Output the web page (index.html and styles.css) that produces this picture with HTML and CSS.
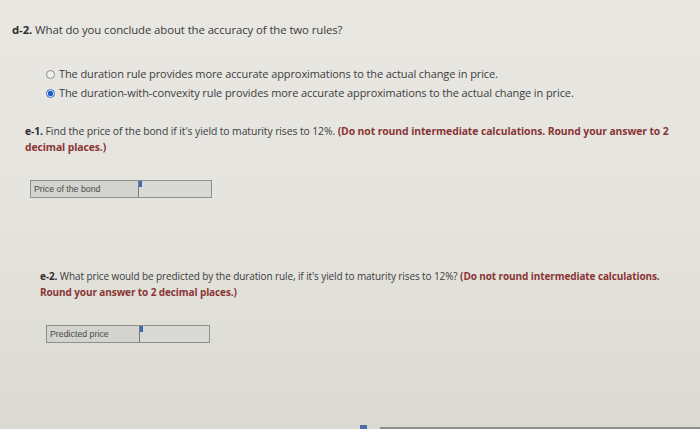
FILE: index.html
```html
<!DOCTYPE html>
<html lang="en">
<head>
<meta charset="utf-8">
<title>Bond question</title>
<link rel="stylesheet" href="styles.css">
</head>
<body>
<main class="page">
  <p class="q-d2"><b>d-2.</b> What do you conclude about the accuracy of the two rules?</p>

  <ul class="options">
    <li class="option"><span class="radio"></span>The duration rule provides more accurate approximations to the actual change in price.</li>
    <li class="option"><span class="radio checked"></span>The duration-with-convexity rule provides more accurate approximations to the actual change in price.</li>
  </ul>

  <section class="part part-e1">
    <p class="prompt"><b>e-1.</b> Find the price of the bond if it's yield to maturity rises to 12%. <strong class="note">(Do not round intermediate calculations. Round your answer to 2 decimal places.)</strong></p>
    <div class="answer answer-e1">
      <span class="label">Price of the bond</span>
      <span class="field"><span class="flag"></span></span>
    </div>
  </section>

  <section class="part part-e2">
    <p class="prompt"><b>e-2.</b> What price would be predicted by the duration rule, if it's yield to maturity rises to 12%? <strong class="note">(Do not round intermediate calculations. Round your answer to 2 decimal places.)</strong></p>
    <div class="answer answer-e2">
      <span class="label">Predicted price</span>
      <span class="field"><span class="flag"></span></span>
    </div>
  </section>

  <div class="bottom-edge"><span class="icon-bit"></span></div>
</main>
</body>
</html>
```

FILE: styles.css
```css
* { box-sizing: border-box; }
html, body { margin: 0; padding: 0; }
body {
  width: 700px;
  height: 429px;
  overflow: hidden;
  font-family: "Open Sans", "Liberation Sans", sans-serif;
  color: #3b3b3b;
  background: linear-gradient(180deg, #e8e7e2 0%, #e5e4de 45%, #dbdad2 100%);
}
.page {
  display: flex;
  flex-direction: column;
  height: 429px;
}
p { margin: 0; }
b { font-weight: 700; color: #2e2e2e; }

.q-d2 {
  margin: 22px 0 0 12px;
  font-size: 11.4px;
  line-height: 16px;
  letter-spacing: -0.1px;
}

.options {
  list-style: none;
  margin: 28px 0 0 46px;
  padding: 0;
  display: flex;
  flex-direction: column;
  gap: 3px;
}
.option {
  display: flex;
  align-items: center;
  gap: 4px;
  font-size: 11px;
  line-height: 16px;
  letter-spacing: -0.1px;
  color: #3d3d3d;
}
.radio {
  width: 9px;
  height: 9px;
  border-radius: 50%;
  border: 1px solid #8a8a8a;
  background: #eeeeea;
  flex: none;
}
.radio.checked {
  border-color: #3a6fc0;
  background: radial-gradient(circle, #1f5fc4 0 2.6px, #e8eef8 3px);
}

.part { display: flex; flex-direction: column; }
.prompt {
  font-size: 10.4px;
  line-height: 15.5px;
  letter-spacing: -0.1px;
  color: #3d3d3d;
}
.note { color: #8a3535; font-weight: 700; }

.part-e1 { margin: 23px 0 0 25px; width: 660px; }
.part-e2 { margin: 71px 0 0 40px; width: 628px; }
.part-e2 .prompt { font-size: 10px; line-height: 15.5px; }

.answer {
  display: flex;
  border: 1px solid #8f8f8c;
  background: #d3d3cf;
}
.answer-e1 { margin: 25px 0 0 5px; width: 182px; height: 18px; }
.answer-e2 { margin: 25px 0 0 6px; width: 164px; height: 18px; }
.label {
  display: flex;
  align-items: center;
  padding-left: 3px;
  font-family: "Liberation Sans", Arial, sans-serif;
  font-size: 8.8px;
  color: #4a4a4a;
}
.answer-e1 .label { width: 107px; }
.answer-e2 .label { width: 92px; }
.field {
  flex: 1;
  position: relative;
  border-left: 1px solid #7b7b78;
  background: #d9d9d5;
}
.flag {
  position: absolute;
  left: 0;
  top: 0;
  width: 3px;
  height: 6px;
  background: #3a6ab2;
}

.bottom-edge {
  margin-top: auto;
  height: 5px;
  display: flex;
  justify-content: flex-end;
  position: relative;
}
.bottom-edge::after {
  content: "";
  width: 320px;
  height: 2px;
  margin-top: 3px;
  background: #8d8c86;
}
.icon-bit {
  position: absolute;
  left: 360px;
  top: 1px;
  width: 7px;
  height: 4px;
  background: #4a6fa8;
}
```
